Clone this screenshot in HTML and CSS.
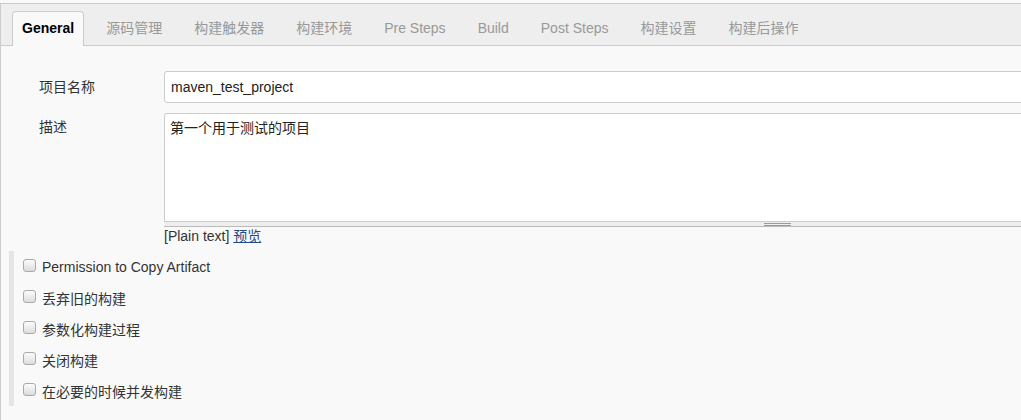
FILE: index.html
```html
<!DOCTYPE html>
<html lang="zh-CN">
<head>
  <meta charset="UTF-8" />
  <title>maven_test_project Config</title>
  <link rel="stylesheet" href="styles.css">
</head>
<body>

  <div class="config">

    <!-- Section tabs -->
    <div class="tabbar">
      <div class="tab active">General</div>
      <div class="tab">源码管理</div>
      <div class="tab">构建触发器</div>
      <div class="tab">构建环境</div>
      <div class="tab">Pre Steps</div>
      <div class="tab">Build</div>
      <div class="tab">Post Steps</div>
      <div class="tab">构建设置</div>
      <div class="tab">构建后操作</div>
    </div>

    <!-- General section -->
    <div class="section">
      <div class="row">
        <div class="label">项目名称</div>
        <div class="field">
          <input class="text-input" type="text" value="maven_test_project" />
        </div>
      </div>

      <div class="row">
        <div class="label label-top">描述</div>
        <div class="field">
          <textarea class="text-area">第一个用于测试的项目</textarea>
          <div class="resizer"><span class="grip"></span></div>
          <div class="preview-line">[Plain text] <a href="#">预览</a></div>
        </div>
      </div>

      <div class="options">
        <label class="option"><input type="checkbox" /> Permission to Copy Artifact</label>
        <label class="option"><input type="checkbox" /> 丢弃旧的构建</label>
        <label class="option"><input type="checkbox" /> 参数化构建过程</label>
        <label class="option"><input type="checkbox" /> 关闭构建</label>
        <label class="option"><input type="checkbox" /> 在必要的时候并发构建</label>
      </div>
    </div>

  </div>

</body>
</html>
```

FILE: styles.css
```css
html, body {
  margin: 0;
  padding: 0;
  background: #f9f9f9;
  overflow: hidden;
}

body {
  padding-top: 3px;
  font-family: 'Liberation Sans', Arial, 'Noto Sans CJK SC', sans-serif;
  font-size: 14px;
  color: #333;
}

.config {
  border-left: 1px solid #ccc;
  min-height: 420px;
  background: #f9f9f9;
}

.tabbar {
  display: flex;
  gap: 12px;
  height: 34px;
  padding: 7px 0 0 11px;
  background: #eee;
  border-top: 1px solid #ccc;
  border-bottom: 1px solid #ccc;
}

.tab {
  padding: 0 9px;
  line-height: 33px;
  color: #999;
  white-space: nowrap;
  border: 1px solid transparent;
  border-bottom: none;
}

.tab.active {
  position: relative;
  height: 34px;
  color: #000;
  font-weight: bold;
  background: #f9f9f9;
  border-color: #ccc;
  border-radius: 4px 4px 0 0;
}

.section {
  padding-top: 25px;
}

.row {
  display: flex;
  margin-bottom: 10px;
}

.label {
  width: 125px;
  flex: none;
  padding-left: 38px;
  line-height: 32px;
  color: #333;
}

.label-top {
  line-height: 18px;
  padding-top: 5px;
}

.field {
  width: 1226px;
  flex: none;
}

.text-input {
  display: block;
  box-sizing: border-box;
  width: 100%;
  height: 32px;
  margin: 0;
  padding: 0 6px;
  border: 1px solid #ccc;
  border-radius: 3px;
  background: #fff;
  font-family: inherit;
  font-size: 14px;
  color: #222;
  outline: none;
}

.text-area {
  display: block;
  box-sizing: border-box;
  width: 100%;
  height: 108px;
  margin: 0;
  padding: 5px 6px 5px 5px;
  border: 1px solid #ccc;
  border-bottom: none;
  border-radius: 3px 3px 0 0;
  background: #fff;
  font-family: inherit;
  font-size: 14px;
  line-height: 18px;
  color: #222;
  resize: none;
  outline: none;
}

.resizer {
  display: flex;
  justify-content: center;
  align-items: center;
  height: 4px;
  background: #eee;
  border-top: 1px solid #ccc;
  border-bottom: 1px solid #bbb;
}

.grip {
  width: 27px;
  height: 1px;
  border-top: 1px solid #999;
  border-bottom: 1px solid #999;
}

.preview-line {
  line-height: 18px;
  color: #333;
}

.preview-line a {
  color: #204a87;
  text-decoration: underline;
}

.row:nth-child(2) {
  margin-bottom: 6px;
}

.options {
  margin-left: 8px;
  border-left: 5px solid #e5e5e5;
  width: 1000px;
}

.option {
  display: flex;
  align-items: center;
  height: 31px;
  padding-left: 9px;
  color: #333;
}

.option input {
  appearance: none;
  -webkit-appearance: none;
  box-sizing: border-box;
  width: 13px;
  height: 13px;
  margin: 0 6px 2px 0;
  border: 1px solid #aaa;
  border-radius: 3px;
  background: linear-gradient(#fcfcfc, #dcdcdc);
}
```
